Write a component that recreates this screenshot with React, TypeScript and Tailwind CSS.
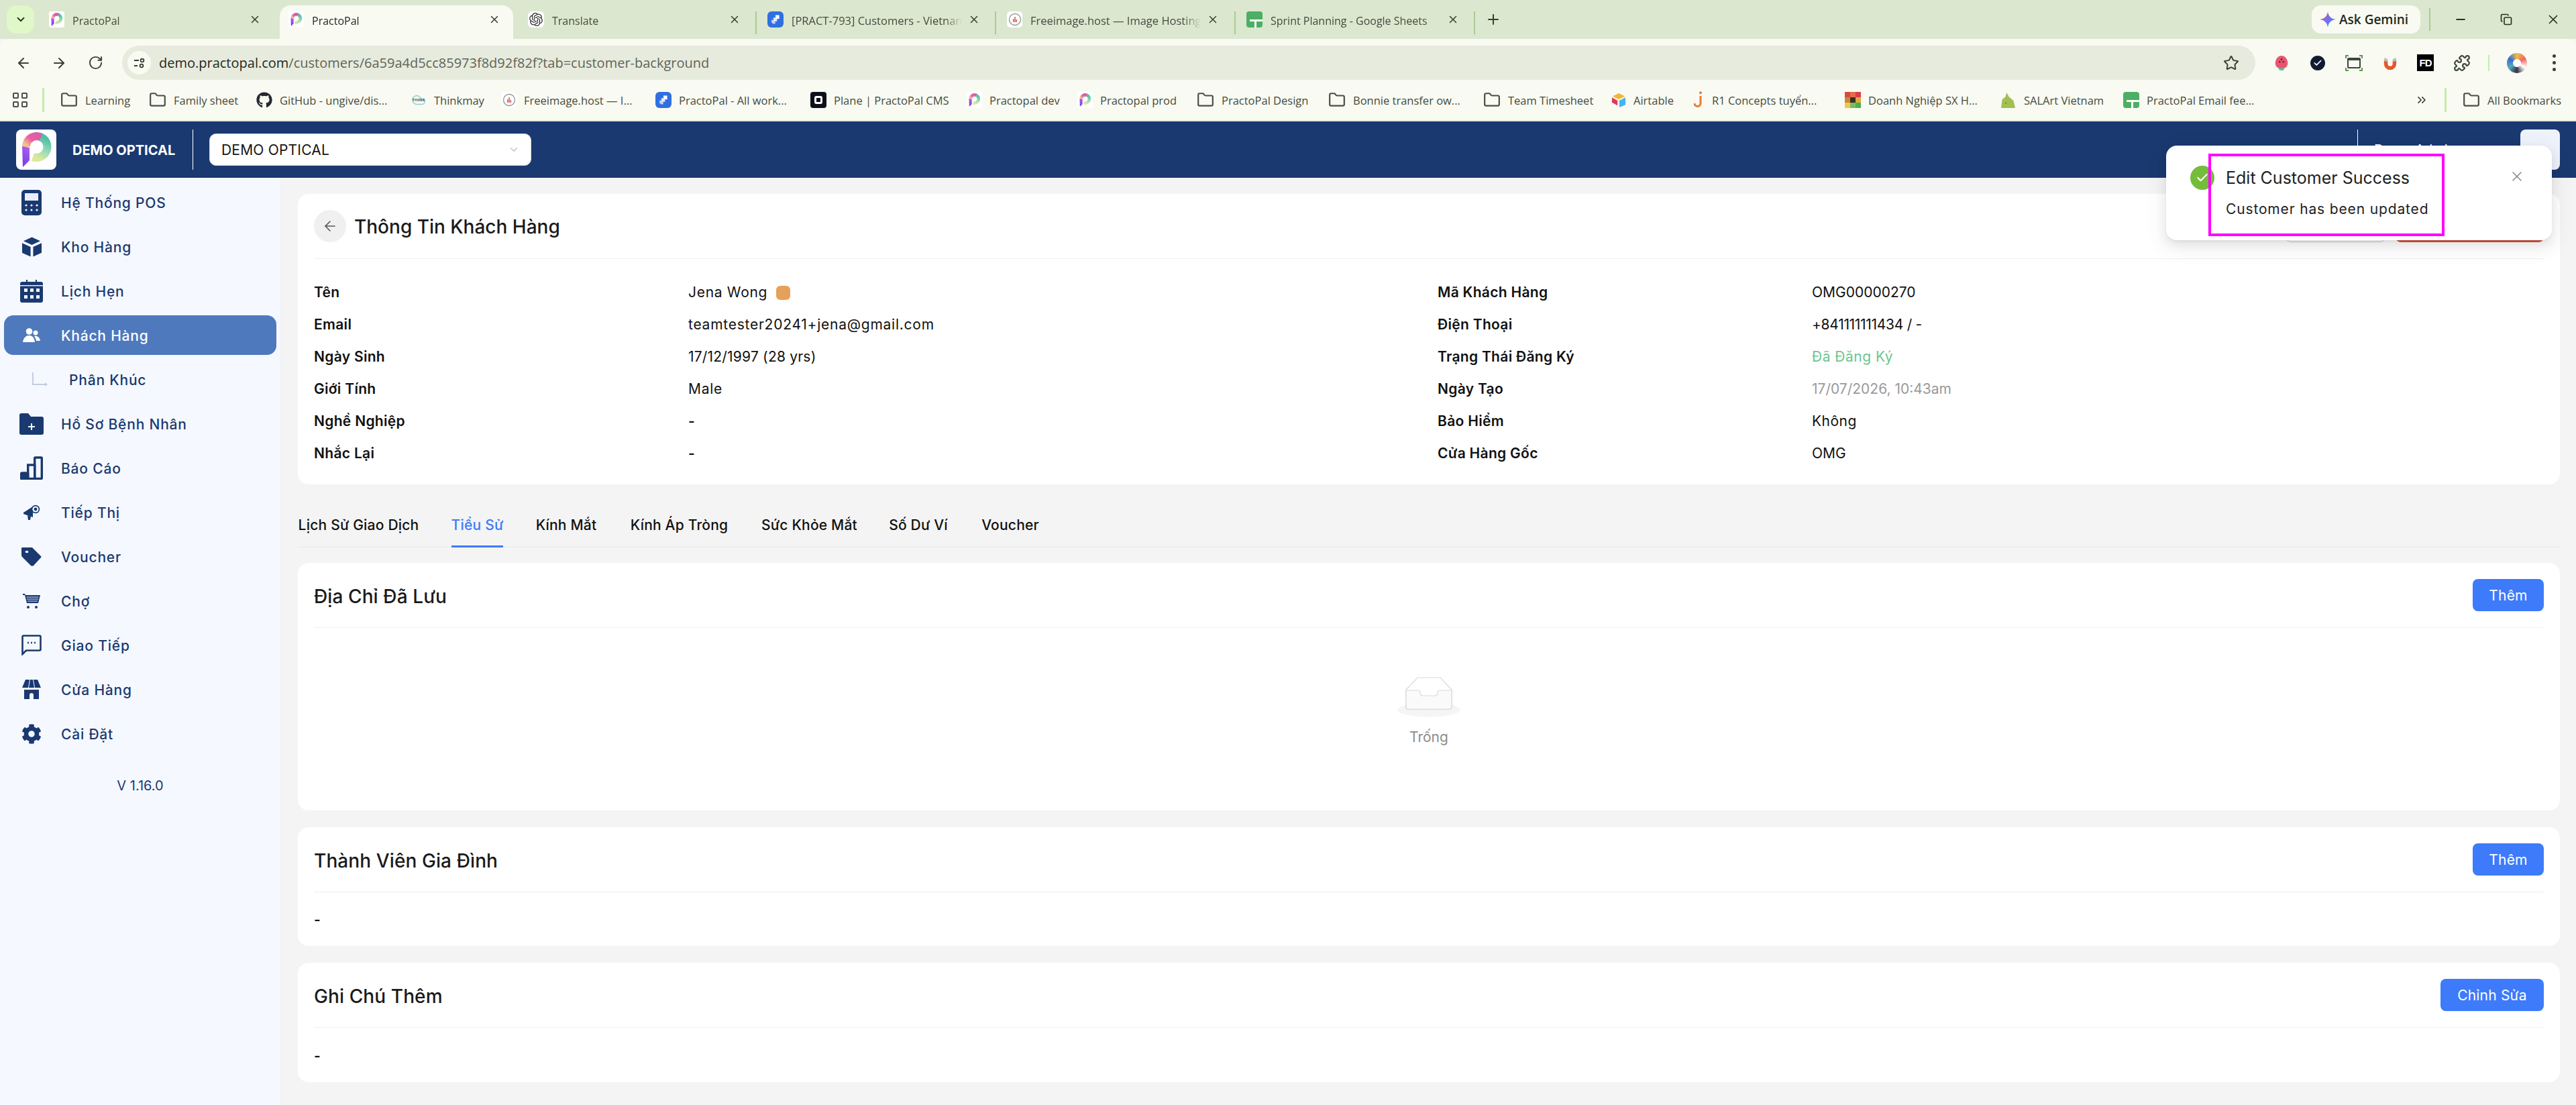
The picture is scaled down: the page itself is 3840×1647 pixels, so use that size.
import React from "react";
import { ArrowLeft, ArrowRight, RotateCw, Star, X, Minus, Plus, ChevronsRight, Folder, Puzzle, ChevronDown, Check, Copy, Cloud } from "lucide-react";
import { FaGithub, FaCog } from "react-icons/fa";
import { SiOpenai } from "react-icons/si";

const chrome = "[font-family:'Open_Sans',sans-serif]";
const app = "[font-family:'Inter',sans-serif]";

function PLogo({ id, className }: { id: string; className: string }) {
  return (
    <svg viewBox="0 0 60 60" className={className} fill="none">
      <defs>
        <linearGradient id={id + "a"} x1="0" y1="1" x2="0.3" y2="0">
          <stop offset="0" stopColor="#6d3be8" />
          <stop offset="1" stopColor="#a85bea" />
        </linearGradient>
        <linearGradient id={id + "b"} x1="0" y1="0.8" x2="1" y2="0">
          <stop offset="0" stopColor="#f2c08c" />
          <stop offset="0.45" stopColor="#ea5fa0" />
          <stop offset="1" stopColor="#d65fa8" />
        </linearGradient>
        <linearGradient id={id + "c"} x1="0.6" y1="0" x2="0.3" y2="1">
          <stop offset="0" stopColor="#4fc0a6" />
          <stop offset="0.6" stopColor="#9fdcb8" />
          <stop offset="1" stopColor="#dce89a" />
        </linearGradient>
      </defs>
      <path d="M36 11A15.500 15.500 0 0 1 25 41" stroke={`url(#${id}c)`} strokeWidth="12" />
      <path d="M15 26A15.500 15.500 0 0 1 37 11.500" stroke={`url(#${id}b)`} strokeWidth="12" />
      <path d="M9 25L20 27L20 46L10 56Z" fill={`url(#${id}a)`} />
    </svg>
  );
}

function JiraIcon() {
  return (
    <span className="w-[24px] h-[24px] rounded-[6px] bg-[#2f6fe0] flex items-center justify-center shrink-0">
      <svg viewBox="0 0 20 20" className="w-[16px] h-[16px]" fill="#fff">
        <path d="M10 2h7v7h-2a5 5 0 0 1-5-5z" />
        <path d="M6 6.5h7v7h-2a5 5 0 0 1-5-5z" opacity="0.85" />
        <path d="M2.5 11h7v7h-2a5 5 0 0 1-5-5z" opacity="0.7" />
      </svg>
    </span>
  );
}
function SheetsIcon() {
  return (
    <span className="w-[24px] h-[24px] rounded-[4px] bg-[#4caf63] relative shrink-0 overflow-hidden">
      <span className="absolute left-[5px] right-0 top-[12px] h-[3px] bg-white" />
      <span className="absolute left-[12px] top-[12px] bottom-0 w-[3px] bg-white" />
    </span>
  );
}
function FreeIcon() {
  return (
    <span className="w-[23px] h-[24px] rounded-[5px] bg-white flex items-center justify-center shrink-0">
      <svg viewBox="0 0 20 20" className="w-[20px] h-[20px]">
        <circle cx="10" cy="10" r="8.5" fill="none" stroke="#9a9a9a" strokeWidth="1.4" />
        <path d="M7 14V9h1.5v5zM9.3 14V6h1.5v8zM11.6 14v-4h1.5v4z" fill="#d9534f" />
      </svg>
    </span>
  );
}
function FaviconP({ id }: { id: string }) {
  return (
    <span className="w-[23px] h-[24px] rounded-[3px] bg-white flex items-center justify-center shrink-0">
      <PLogo id={id} className="w-[23px] h-[24px]" />
    </span>
  );
}

const tabs = [
  { t: "PractoPal", i: <FaviconP id="t1" />, active: false, s: "text-[16px]" },
  { t: "PractoPal", i: <FaviconP id="t2" />, active: true, s: "text-[16px]" },
  { t: "Translate", i: <span className="w-[24px] h-[24px] rounded-[6px] bg-white flex items-center justify-center shrink-0"><SiOpenai className="w-[20px] h-[20px] text-[#333]" /></span>, active: false, s: "text-[16px]" },
  { t: "[PRACT-793] Customers - Vietnam", i: <JiraIcon />, active: false, s: "text-[16.5px]" },
  { t: "Freeimage.host — Image Hosting", i: <FreeIcon />, active: false, s: "text-[16.5px]" },
  { t: "Sprint Planning - Google Sheets", i: <SheetsIcon />, active: false, s: "text-[16px]" },
];

function TabStrip() {
  return (
    <div className={`h-[58px] bg-[#dbe7cf] flex items-start pt-[8px] pl-[10px] pr-[23px] shrink-0 ${chrome}`}>
      <div className="w-[41px] h-[42px] rounded-[14px] bg-[#e0f7c7] flex items-center justify-center mr-[9px] shrink-0">
        <ChevronDown className="w-[18px] h-[18px] text-[#26331f]" strokeWidth={2.4} />
      </div>
      {tabs.map((tab, i) => (
        <React.Fragment key={i}>
          <div className={`w-[348px] h-[50px] rounded-t-[16px] flex items-start pt-[9px] pl-[13px] pr-[14px] shrink-0 ${tab.active ? "bg-[#f9faf2]" : ""}`}>
            {tab.i}
            <span className={`ml-[12px] mt-[2px] w-[254px] whitespace-nowrap overflow-hidden leading-[24px] [mask-image:linear-gradient(to_right,#000_90%,transparent)] ${tab.s} ${tab.active ? "text-[#232a20]" : "text-[#444c40]"}`}>{tab.t}</span>
            <X className="ml-[9px] mt-[3px] w-[18px] h-[18px] text-[#34402f] shrink-0" strokeWidth={2} />
          </div>
          <div className="w-[9px] h-[34px] flex justify-center mt-[9px] shrink-0">
            {i > 1 && <span className="w-[2px] h-full bg-[#a9cc8f]" />}
          </div>
        </React.Fragment>
      ))}
      <Plus className="ml-[12px] mt-[9px] w-[24px] h-[24px] text-[#34402f] shrink-0" strokeWidth={2} />
      <div className="ml-auto flex items-center h-[42px]">
        <div className="w-[162px] h-[42px] rounded-[14px] bg-[#f9faf2] flex items-center pl-[12px]">
          <svg viewBox="0 0 24 24" className="w-[24px] h-[30px] shrink-0">
            <defs>
              <linearGradient id="gem" x1="0" y1="0" x2="1" y2="1">
                <stop offset="0" stopColor="#f0663f" />
                <stop offset="0.5" stopColor="#7a6cf0" />
                <stop offset="1" stopColor="#2ea6f2" />
              </linearGradient>
            </defs>
            <path d="M12 0C12.8 7 17 11.2 24 12C17 12.8 12.8 17 12 24C11.2 17 7 12.8 0 12C7 11.2 11.2 7 12 0Z" fill="url(#gem)" />
          </svg>
          <span className="ml-[5px] text-[19px] font-semibold text-[#1f2a1c] whitespace-nowrap">Ask Gemini</span>
        </div>
        <span className="w-[2px] h-[34px] bg-[#a9cc8f] ml-[13px]" />
        <Minus className="ml-[35px] w-[20px] h-[20px] text-[#26331f]" strokeWidth={2.4} />
        <Copy className="ml-[49px] w-[18px] h-[18px] text-[#26331f]" strokeWidth={2.2} />
        <X className="ml-[50px] w-[22px] h-[22px] text-[#26331f]" strokeWidth={1.8} />
      </div>
    </div>
  );
}

function ExtIcons() {
  return (
    <div className="flex items-center h-full">
      <svg viewBox="0 0 24 26" className="w-[22px] h-[24px] ml-[0px]">
        <path d="M12 1C18 1 23 8 22 15C21 20 17 22 12 22C7 22 3 20 2 15C1 8 6 1 12 1Z" fill="#e8566e" />
        <path d="M6 20C9 22 15 22 18 20L15 25H9Z" fill="#63c2a2" />
        <circle cx="9" cy="11" r="1.3" fill="#4a2030" /><circle cx="15" cy="11" r="1.3" fill="#4a2030" /><circle cx="12" cy="7" r="1.3" fill="#4a2030" />
      </svg>
      <span className="w-[22px] h-[22px] rounded-full bg-[#111c33] ml-[32px] flex items-center justify-center">
        <Check className="w-[14px] h-[14px] text-white" strokeWidth={3} />
      </span>
      <svg viewBox="0 0 26 24" className="w-[26px] h-[24px] ml-[30px]" fill="none">
        <rect x="4" y="5" width="18" height="14" rx="1" stroke="#3f463b" strokeWidth="2" />
        <path d="M4 5h18v3H4z" fill="#3f463b" />
        <path d="M1 5V1h4M21 1h4v4M25 19v4h-4M5 23H1v-4" stroke="#5c9a4c" strokeWidth="2" />
      </svg>
      <svg viewBox="0 0 24 24" className="w-[22px] h-[22px] ml-[30px]" fill="none">
        <path d="M5 8v5a7 7 0 0 0 14 0V8" stroke="#e4582b" strokeWidth="6" />
        <path d="M3 3l5 3-1 4-5-2zM21 3l-5 3 1 4 5-2z" fill="#bdbdbd" />
      </svg>
      <span className="w-[25px] h-[25px] bg-black ml-[29px] text-white text-[15px] font-black leading-[25px] text-center tracking-[-1px] [font-family:'Liberation_Sans',sans-serif]">FD</span>
      <Puzzle className="w-[26px] h-[26px] text-[#3f4a38] ml-[29px]" strokeWidth={2} />
      <span className="w-[2px] h-[24px] bg-[#c5ecaa] ml-[26px]" />
      <span className="w-[30px] h-[30px] rounded-full ml-[26px] bg-[conic-gradient(#f0c040,#e66,#fff,#334,#5ab,#3a6fd0,#f0c040)] flex items-center justify-center">
        <span className="w-[12px] h-[12px] rounded-full bg-white" />
      </span>
      <span className="flex flex-col gap-[5px] ml-[38px]">
        <span className="w-[5px] h-[5px] rounded-full bg-[#3a4336]" />
        <span className="w-[5px] h-[5px] rounded-full bg-[#3a4336]" />
        <span className="w-[5px] h-[5px] rounded-full bg-[#3a4336]" />
      </span>
    </div>
  );
}

function Toolbar() {
  return (
    <div className={`h-[61px] bg-[#f9faf2] rounded-t-[12px] flex items-start shrink-0 ${chrome}`}>
      <div className="flex items-center h-[51px] mt-[10px] pl-[23px] w-[182px] shrink-0">
        <ArrowLeft className="w-[24px] h-[24px] text-[#3a4336]" strokeWidth={2} />
        <ArrowRight className="w-[24px] h-[24px] text-[#3a4336] ml-[29px]" strokeWidth={2} />
        <RotateCw className="w-[23px] h-[23px] text-[#3a4336] ml-[31px]" strokeWidth={2} />
      </div>
      <div className="w-[3180px] h-[51px] mt-[10px] rounded-full bg-[#e7ebdd] flex items-center pl-[8px] pr-[24px] shrink-0">
        <span className="w-[35px] h-[35px] rounded-full bg-[#f9faf2] flex items-center justify-center shrink-0">
          <svg viewBox="0 0 20 20" className="w-[20px] h-[20px]" fill="none" stroke="#333c30" strokeWidth="1.8">
            <path d="M2 6h7M2 14h5" /><circle cx="14" cy="6" r="2.4" /><circle cx="13" cy="14" r="2.4" />
          </svg>
        </span>
        <span className="ml-[12px] text-[20px] whitespace-nowrap text-[#5d6559]"><span className="text-[#1f271c]">demo.practopal.com</span>/customers/6a59a4d5cc85973f8d92f82f?tab=customer-background</span>
        <Star className="ml-auto w-[24px] h-[24px] text-[#3a4336]" strokeWidth={2} />
      </div>
      <div className="h-[51px] mt-[10px] pl-[28px] flex items-center">
        <ExtIcons />
      </div>
    </div>
  );
}

const FolderI = () => <Folder className="w-[26px] h-[26px] text-[#4a4f46] shrink-0" strokeWidth={2} />;

const bookmarks = [
  { t: "Learning", w: "w-[132px]", i: <FolderI /> },
  { t: "Family sheet", w: "w-[160px]", i: <FolderI /> },
  { t: "GitHub - ungive/dis...", w: "w-[230px]", i: <FaGithub className="w-[24px] h-[24px] text-[#24292f] shrink-0" /> },
  { t: "Thinkmay", w: "w-[135px]", i: <span className="w-[24px] h-[24px] relative flex items-center justify-center shrink-0"><Cloud className="w-[22px] h-[22px] text-[#8fd0d8]" strokeWidth={1.6} /><span className="absolute text-[6px] font-bold text-[#4a5a60] leading-none">THINK</span></span> },
  { t: "Freeimage.host — I...", w: "w-[230px]", i: <FreeIcon /> },
  { t: "PractoPal - All work...", w: "w-[231px]", i: <JiraIcon /> },
  { t: "Plane | PractoPal CMS", w: "w-[233px]", i: <span className="w-[24px] h-[24px] rounded-[4px] bg-[#0c1017] flex items-center justify-center shrink-0"><span className="w-[12px] h-[12px] border-[3px] border-white rounded-[3px]" /></span> },
  { t: "Practopal dev", w: "w-[165px]", i: <FaviconP id="b1" /> },
  { t: "Practopal prod", w: "w-[178px]", i: <FaviconP id="b2" /> },
  { t: "PractoPal Design", w: "w-[196px]", i: <FolderI /> },
  { t: "Bonnie transfer ow...", w: "w-[231px]", i: <FolderI /> },
  { t: "Team Timesheet", w: "w-[191px]", i: <FolderI /> },
  { t: "Airtable", w: "w-[123px]", i: <svg viewBox="0 0 24 24" className="w-[22px] h-[24px] shrink-0"><path d="M12 1l10 5-10 5L2 6z" fill="#f2b632" /><path d="M13 13l10-5v12l-10 4z" fill="#45b4f0" /><path d="M1 8l9 5v8L1 16z" fill="#e3365c" /></svg> },
  { t: "R1 Concepts tuyển...", w: "w-[225px]", i: <svg viewBox="0 0 16 26" className="w-[16px] h-[26px] shrink-0" fill="none"><path d="M10 7v11a4.5 4.5 0 0 1-9 0" stroke="#ea7a2d" strokeWidth="3" /><circle cx="10" cy="2.2" r="2" fill="#ea7a2d" /></svg> },
  { t: "Doanh Nghiệp SX H...", w: "w-[232px]", i: <span className="w-[24px] h-[24px] grid grid-cols-3 grid-rows-3 shrink-0"><span className="bg-[#d94a3c]" /><span className="bg-[#e56a4a]" /><span className="bg-[#d93c4a]" /><span className="bg-[#c8873c]" /><span className="bg-[#3a3020]" /><span className="bg-[#e0a83c]" /><span className="bg-[#f0c84a]" /><span className="bg-[#7cba5c]" /><span className="bg-[#4caf50]" /></span> },
  { t: "SALArt Vietnam", w: "w-[183px]", i: <svg viewBox="0 0 24 26" className="w-[24px] h-[24px] shrink-0"><path d="M9 1L13 8L20 14L23 26H0L2 12L7 8Z" fill="#a3bf52" /><circle cx="8" cy="18" r="1" fill="#5a6c28" /></svg> },
  { t: "PractoPal Email fee...", w: "w-[190px]", i: <SheetsIcon /> },
];

function Bookmarks() {
  return (
    <div className={`h-[62px] bg-[#f9faf2] border-b-2 border-[#e4e6da] flex items-center shrink-0 ${chrome}`}>
      <div className="w-[90px] flex items-center pl-[19px] shrink-0">
        <span className="grid grid-cols-2 gap-[4px] w-[22px]">
          <span className="w-[9px] h-[9px] rounded-[2px] border-2 border-[#4a4f46]" />
          <span className="w-[9px] h-[9px] rounded-[2px] border-2 border-[#4a4f46]" />
          <span className="w-[9px] h-[9px] rounded-[2px] border-2 border-[#4a4f46]" />
          <span className="w-[9px] h-[9px] rounded-[2px] border-2 border-[#4a4f46]" />
        </span>
        <span className="w-[3px] h-[36px] bg-[#c5ecaa] ml-[22px]" />
      </div>
      {bookmarks.map((b, i) => (
        <div key={i} className={`${b.w} flex items-center gap-[11px] shrink-0`}>
          {b.i}
          <span className="pt-[2px] text-[16.5px] text-[#444c40] whitespace-nowrap">{b.t}</span>
        </div>
      ))}
      <div className="ml-auto flex items-center pr-[22px]">
        <ChevronsRight className="w-[20px] h-[20px] text-[#3a4336]" strokeWidth={2} />
        <span className="w-[3px] h-[36px] bg-[#c5ecaa] ml-[24px]" />
        <span className="ml-[24px]"><FolderI /></span>
        <span className="ml-[11px] pt-[2px] text-[16.5px] text-[#444c40] whitespace-nowrap">All Bookmarks</span>
      </div>
    </div>
  );
}

function Header() {
  return (
    <div className={`h-[84px] bg-[#1a3970] flex items-center shrink-0 ${app}`}>
      <div className="w-[60px] h-[60px] rounded-[8px] bg-white ml-[24px] flex items-center justify-center shrink-0">
        <PLogo id="hd" className="w-[60px] h-[60px]" />
      </div>
      <span className="ml-[24px] pt-[2px] text-white font-bold text-[20px] whitespace-nowrap w-[155px]">DEMO OPTICAL</span>
      <span className="ml-[24px] w-px h-[60px] bg-white" />
      <div className="ml-[24px] w-[480px] h-[48px] rounded-[10px] bg-white border border-[#d9d9d9] flex items-center pl-[17px] pr-[16px]">
        <span className="pt-[2px] text-[21px] tracking-[0.2px] text-[#161616] whitespace-nowrap">DEMO OPTICAL</span>
        <ChevronDown className="ml-auto w-[18px] h-[18px] text-[#bdbdbd]" strokeWidth={1.6} />
      </div>
      <span className="ml-auto w-px h-[60px] bg-white" />
      <span className="ml-[24px] w-[140px] text-white text-[20px] whitespace-nowrap">Demo Admin</span>
      <div className="ml-[78px] mr-[24px] w-[59px] h-[60px] rounded-[8px] bg-[#eef2fb] flex items-center justify-center">
        <span className="w-[12px] h-[12px] rounded-full bg-[#333]" />
      </div>
    </div>
  );
}

const navy = "#1a3970";
function Calc() {
  return <svg viewBox="0 0 30 38" className="w-[30px] h-[38px]"><rect width="30" height="38" rx="5" fill={navy} /><rect x="5" y="5" width="20" height="11" fill="#f5f8ff" opacity="0.95" /><g fill="#f5f8ff"><circle cx="7" cy="23" r="1.6" /><circle cx="15" cy="23" r="1.6" /><circle cx="23" cy="23" r="1.6" /><circle cx="7" cy="30" r="1.6" /><circle cx="15" cy="30" r="1.6" /><circle cx="23" cy="30" r="1.6" /></g></svg>;
}
function Box() {
  return <svg viewBox="0 0 30 30" className="w-[29px] h-[30px]" fill={navy}><path d="M15 0L28 6L15 12L2 6Z" /><path d="M0 9L13 15V30L2 25L0 24Z" /><path d="M30 9L17 15V30L30 24Z" /></svg>;
}
function Cal() {
  return <svg viewBox="0 0 34 34" className="w-[34px] h-[34px]"><path d="M9 0h2v5H9zM23 0h2v5h-2z" fill={navy} /><rect y="3" width="34" height="31" rx="3" fill={navy} /><rect y="8" width="34" height="1.4" fill="#f5f8ff" /><g fill="#f5f8ff"><rect x="6" y="13" width="5" height="5" /><rect x="15" y="13" width="5" height="5" /><rect x="24" y="13" width="5" height="5" /><rect x="6" y="23" width="5" height="5" /><rect x="15" y="23" width="5" height="5" /><rect x="24" y="23" width="5" height="5" /></g></svg>;
}
function Users() {
  return <svg viewBox="0 0 26 22" className="w-[26px] h-[22px]" fill="#fff"><circle cx="9.5" cy="5" r="4.8" /><circle cx="19" cy="7" r="3.5" /><path d="M0 21C1 14 5 11 9.5 11C14 11 17 14 18 21Z" /><path d="M17 12C21 11 25 13 26 19H20C19.5 16 18.5 14 17 12Z" /></svg>;
}
function FolderPlus() {
  return <svg viewBox="0 0 36 32" className="w-[36px] h-[32px]"><path d="M0 3a3 3 0 0 1 3-3h10l4 5h16a3 3 0 0 1 3 3v21a3 3 0 0 1-3 3H3a3 3 0 0 1-3-3z" fill={navy} /><path d="M17 4h15" stroke="#f5f8ff" strokeWidth="1" /><path d="M13 20h10M18 15v10" stroke="#f5f8ff" strokeWidth="2" /></svg>;
}
function Bars() {
  return <svg viewBox="0 0 34 35" className="w-[34px] h-[35px]" fill="none" stroke={navy} strokeWidth="3.4"><rect x="1.7" y="25" width="10" height="8.5" rx="1" /><rect x="11.7" y="13" width="10" height="20.5" /><rect x="21.7" y="2" width="10.6" height="31.5" rx="1" /><rect x="1.7" y="27" width="8" height="6" fill={navy} /></svg>;
}
function Mega() {
  return <svg viewBox="0 0 25 25" className="w-[25px] h-[25px]" fill={navy}><path d="M0 13L14 4V20L0 15Z" /><path d="M6 17l5 2-1 5H7z" /><circle cx="18" cy="8" r="6.2" /><circle cx="18" cy="8" r="4.6" fill="#f5f8ff" /><circle cx="18" cy="8" r="2.4" /></svg>;
}
function Tag() {
  return <svg viewBox="0 0 30 28" className="w-[30px] h-[28px]"><path d="M1 0H16L29 13Q30 14 29 15L18 27Q16 28.500 14 27L1 14Q0 13 0 11V1Q0 0 1 0Z" fill={navy} /><ellipse cx="8" cy="6.500" rx="2.4" ry="1.700" fill="#f5f8ff" /></svg>;
}
function Cart() {
  return <svg viewBox="0 0 26 22" className="w-[26px] h-[22px]" fill={navy}><path d="M0 0h3l1 2h22l-3 12H6L3 2H0z" /><path d="M5.5 5h18M6 8h17M7 11h15" stroke="#f5f8ff" strokeWidth="0.9" /><circle cx="8" cy="20" r="2" /><circle cx="20" cy="20" r="2" /></svg>;
}
function Chat() {
  return <svg viewBox="0 0 30 31" className="w-[30px] h-[31px]" fill="none"><path d="M1.5 29V3a1.5 1.5 0 0 1 1.5-1.5h24A1.5 1.5 0 0 1 28.5 3v19A1.5 1.5 0 0 1 27 23.5H7Z" stroke={navy} strokeWidth="2.6" /><path d="M9 12h2M14 12h2M19 12h2" stroke={navy} strokeWidth="2.4" /></svg>;
}
function Store() {
  return <svg viewBox="0 0 28 29" className="w-[28px] h-[29px]" fill={navy}><path d="M5 0h6L9 12H0z" /><path d="M12 0h4l2 12H10z" /><path d="M17 0h6l5 12h-9z" /><path d="M3 15h22v14H17v-6a3 3 0 0 0-6 0v6H3z" /></svg>;
}
function Gear() {
  return <FaCog className="w-[30px] h-[30px] text-[#1a3970]" />;
}

const nav = [
  { t: "Hệ Thống POS", i: <Calc /> },
  { t: "Kho Hàng", i: <Box /> },
  { t: "Lịch Hẹn", i: <Cal /> },
  { t: "Khách Hàng", i: <Users />, active: true },
  { t: "Phân Khúc", sub: true, i: <svg viewBox="0 0 24 21" className="w-[24px] h-[21px] ml-[25px]" fill="none" stroke="#c3cce0" strokeWidth="2"><path d="M1 0v18h20" /><path d="M19 15l4 3-4 3" fill="#c3cce0" stroke="none" /></svg> },
  { t: "Hồ Sơ Bệnh Nhân", i: <FolderPlus /> },
  { t: "Báo Cáo", i: <Bars /> },
  { t: "Tiếp Thị", i: <Mega /> },
  { t: "Voucher", i: <Tag /> },
  { t: "Chợ", i: <Cart /> },
  { t: "Giao Tiếp", i: <Chat /> },
  { t: "Cửa Hàng", i: <Store /> },
  { t: "Cài Đặt", i: <Gear /> },
];

function Sidebar() {
  return (
    <aside className={`w-[419px] shrink-0 bg-[#f5f8ff] border-r border-[#eef0f4] pt-[7px] flex flex-col ${app}`}>
      <div className="flex flex-col gap-[7px]">
        {nav.map((n, i) => (
          <div key={i} className={`mx-[6px] h-[59px] rounded-[14px] flex items-center ${n.active ? "bg-[#4f79bd]" : ""}`}>
            <span className="w-[82px] flex justify-center shrink-0 mr-[3px]">{n.i}</span>
            <span className={`pt-[2px] text-[21px] tracking-[0.8px] font-medium whitespace-nowrap ${n.sub ? "ml-[12px]" : ""} ${n.active ? "text-white" : "text-[#1a3970]"}`}>{n.t}</span>
          </div>
        ))}
      </div>
      <div className="mt-[33px] text-center text-[20px] leading-[30px] text-[#1a3970]">V 1.16.0</div>
    </aside>
  );
}

const left = [
  ["Tên", "Jena Wong", "tracking-[0.7px]"],
  ["Email", "teamtester20241+jena@gmail.com", "tracking-[0.75px]"],
  ["Ngày Sinh", "17/12/1997 (28 yrs)", "tracking-[0.2px]"],
  ["Giới Tính", "Male", "tracking-[0.7px]"],
  ["Nghề Nghiệp", "-", "font-semibold"],
  ["Nhắc Lại", "-", "font-semibold"],
];
const right = [
  ["Mã Khách Hàng", "OMG00000270", "text-[#111111]"],
  ["Điện Thoại", "+841111111434 / -", "text-[#111111] tracking-[-0.3px]"],
  ["Trạng Thái Đăng Ký", "Đã Đăng Ký", "text-[#6cc68f] tracking-[0.5px]"],
  ["Ngày Tạo", "17/07/2026, 10:43am", "text-[#9a9a9a]"],
  ["Bảo Hiểm", "Không", "text-[#111111] tracking-[0.5px]"],
  ["Cửa Hàng Gốc", "OMG", "text-[#111111]"],
];

function InfoCard() {
  return (
    <section className="bg-white rounded-[16px] h-[433px] px-[24px] pt-[24px]">
      <div className="h-[73px] border-b border-[#efefef] flex items-start">
        <span className="w-[48px] h-[48px] rounded-full bg-[#f0f0f0] flex items-center justify-center shrink-0">
          <ArrowLeft className="w-[24px] h-[24px] text-[#555]" strokeWidth={1.6} />
        </span>
        <h1 className="ml-[12px] pt-[1px] text-[28px] leading-[48px] font-medium text-[#1a1a1a] whitespace-nowrap">Thông Tin Khách Hàng</h1>
        <div className="ml-auto flex gap-[15px]">
          <span className="w-[149px] h-[48px] rounded-[8px] border border-[#ccc] bg-white" />
          <span className="w-[221px] h-[48px] rounded-[8px] bg-[#d9503f]" />
        </div>
      </div>
      <div className="pt-[26px] grid grid-cols-[1675px_1fr] text-[21px] leading-[48px] text-[#111111]">
        <div>
          {left.map(([k, v, c], i) => (
            <div key={k} className="grid grid-cols-[558px_1fr] h-[48px]">
              <span className="font-semibold tracking-[0.3px]">{k}</span>
              <span className={`flex items-center ${c}`}>
                <span className={i === 0 ? "w-[116px] whitespace-nowrap" : "whitespace-nowrap"}>{v}</span>
                {i === 0 && <span className="ml-[15px] w-[21px] h-[21px] rounded-[6px] bg-[#e5a15a]" />}
              </span>
            </div>
          ))}
        </div>
        <div>
          {right.map(([k, v, c]) => (
            <div key={k} className="grid grid-cols-[558px_1fr] h-[48px]">
              <span className="font-semibold tracking-[0.3px]">{k}</span>
              <span className={c}>{v}</span>
            </div>
          ))}
        </div>
      </div>
    </section>
  );
}

const tabRow = [
  ["Lịch Sử Giao Dịch", "w-[181px]"],
  ["Tiểu Sử", "w-[77px]"],
  ["Kính Mắt", "w-[92px]"],
  ["Kính Áp Tròng", "w-[149px]"],
  ["Sức Khỏe Mắt", "w-[143px]"],
  ["Số Dư Ví", "w-[86px]"],
  ["Voucher", "w-[92px]"],
];

function SectionCard({ title, action, actionW, children }: { title: string; action: string; actionW: string; children: React.ReactNode }) {
  return (
    <section className="bg-white rounded-[16px] px-[24px] pt-[24px]">
      <div className="h-[73px] border-b border-[#efefef] flex items-start justify-between">
        <h2 className="pt-[2px] text-[28px] tracking-[0.1px] leading-[48px] font-medium text-[#1a1a1a]">{title}</h2>
        <button className={`${actionW} h-[48px] pt-[2px] rounded-[8px] bg-[#3d7bfa] text-white text-[21px] tracking-[0.2px]`}>{action}</button>
      </div>
      {children}
    </section>
  );
}

function Main() {
  return (
    <main className={`flex-1 bg-[#f4f4f4] pl-[25px] pr-[24px] pt-[24px] min-w-0 ${app}`}>
      <InfoCard />
      <div className="mt-[36px] h-[58px] border-b border-[#e9e9e9] flex gap-[48px]">
        {tabRow.map(([t, w], i) => (
          <div key={t} className={`${w} h-[58px] pb-[6px] border-b-[3px] flex items-center justify-center whitespace-nowrap text-[21px] tracking-[0.2px] font-medium ${i === 1 ? "border-[#3d7bfa] text-[#3d7bfa]" : "border-transparent text-[#111111]"}`}>{t}</div>
        ))}
      </div>
      <div className="mt-[23px] flex flex-col gap-[25px]">
        <SectionCard title="Địa Chỉ Đã Lưu" action="Thêm" actionW="w-[106px]">
          <div className="h-[272px] pt-[73px] flex flex-col items-center">
            <svg viewBox="0 0 94 60" className="w-[94px] h-[60px]">
              <ellipse cx="47" cy="49" rx="47" ry="10.500" fill="#f5f5f5" />
              <path d="M13 19L30 1H64L81 19V45a3 3 0 0 1-3 3H16a3 3 0 0 1-3-3Z" fill="#fff" stroke="#d9d9d9" strokeWidth="1.2" />
              <path d="M13 20H31C33 20 34 21 34 23C34 26 35 28 38 28H56C59 28 60 26 60 23C60 21 61 20 63 20H81V45a3 3 0 0 1-3 3H16a3 3 0 0 1-3-3Z" fill="#fafafa" stroke="#d9d9d9" strokeWidth="1.2" />
            </svg>
            <span className="mt-[15px] text-[21px] leading-[30px] text-[#8c8c8c]">Trống</span>
          </div>
        </SectionCard>
        <SectionCard title="Thành Viên Gia Đình" action="Thêm" actionW="w-[106px]">
          <div className="h-[80px] pt-[2px] flex items-center text-[21px] font-semibold text-[#111111]">-</div>
        </SectionCard>
        <SectionCard title="Ghi Chú Thêm" action="Chỉnh Sửa" actionW="w-[154px]">
          <div className="h-[81px] pt-[2px] flex items-center text-[21px] font-semibold text-[#111111]">-</div>
        </SectionCard>
      </div>
    </main>
  );
}

function Toast() {
  return (
    <div className={`absolute left-[3229px] top-[217px] w-[575px] h-[141px] rounded-[16px] bg-white shadow-[0_6px_16px_0_rgba(0,0,0,0.08),0_3px_6px_-4px_rgba(0,0,0,0.12),0_9px_28px_8px_rgba(0,0,0,0.05)] flex items-start pl-[36px] pt-[30px] ${app}`}>
      <span className="w-[36px] h-[36px] rounded-full bg-[#73bd3b] flex items-center justify-center shrink-0">
        <Check className="w-[20px] h-[20px] text-white" strokeWidth={2.6} />
      </span>
      <div className="ml-[17px] text-[#222]">
        <div className="text-[25px] leading-[37px] whitespace-nowrap">Edit Customer Success</div>
        <div className="mt-[13px] text-[21px] tracking-[0.85px] leading-[30px] whitespace-nowrap">Customer has been updated</div>
      </div>
      <X className="absolute left-[511px] top-[34px] w-[24px] h-[24px] text-[#8a8a8a]" strokeWidth={1.6} />
    </div>
  );
}

export default function App() {
  return (
    <div className="relative w-[3840px] h-[1647px] overflow-hidden flex flex-col bg-[#f4f4f4]">
      <TabStrip />
      <Toolbar />
      <Bookmarks />
      <Header />
      <div className="flex flex-1 min-h-0">
        <Sidebar />
        <Main />
      </div>
      <Toast />
      <div className="absolute left-[3292px] top-[229px] w-[352px] h-[123px] border-4 border-[#ff00ff]" />
    </div>
  );
}
